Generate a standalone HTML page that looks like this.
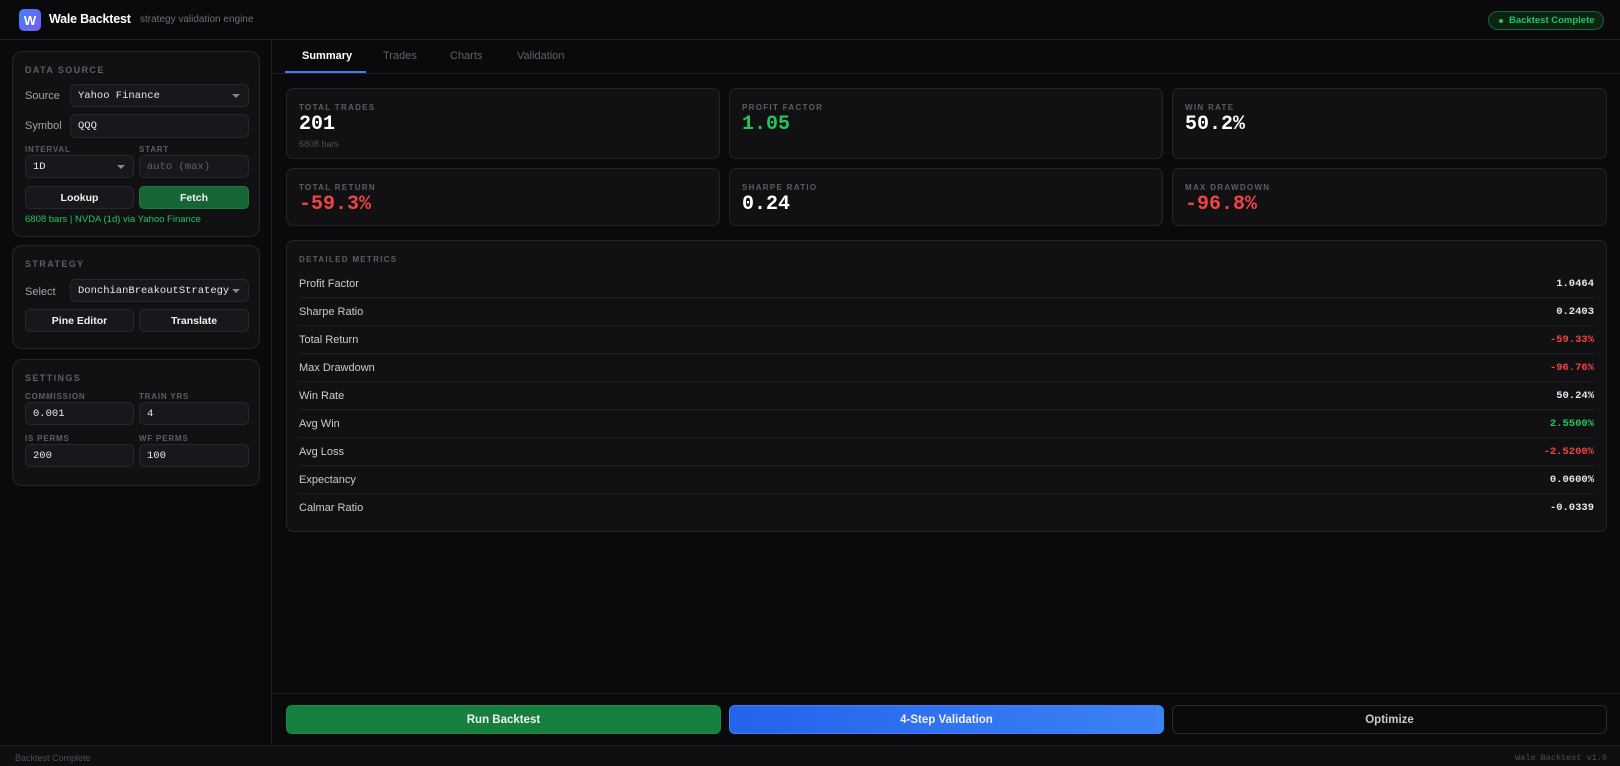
<!DOCTYPE html>
<html><head><meta charset="utf-8"><style>
*{box-sizing:border-box;margin:0;padding:0}
body{width:1620px;height:766px;background:#0a0a0c;font-family:"Liberation Sans",sans-serif;color:#e5e7eb;position:relative;overflow:hidden;font-size:11px}
.abs{position:absolute}
.mono{font-family:"Liberation Mono",monospace}
.panel{position:absolute;left:12px;width:248px;background:#111114;border:1px solid #24242a;border-radius:10px}
.ph{position:absolute;left:12px;font-size:9px;letter-spacing:1.4px;color:#5b5e66;font-weight:bold}
.lbl{position:absolute;font-size:11px;color:#a1a4ab}
.inp{position:absolute;background:#18181c;border:1px solid #27272d;border-radius:5px;font-family:"Liberation Mono",monospace;font-size:10.5px;color:#e5e7eb;padding-left:7px;display:flex;align-items:center}
.inp .car{position:absolute;right:8px;top:50%;margin-top:-2px;border-left:4px solid transparent;border-right:4px solid transparent;border-top:4px solid #888}
.sl{position:absolute;font-size:8px;letter-spacing:0.8px;color:#5b5e66;font-weight:bold}
.btn{position:absolute;background:#18181c;border:1px solid #27272d;border-radius:5px;font-size:10.5px;font-weight:bold;color:#f1f1f1;display:flex;align-items:center;justify-content:center}
.card{position:absolute;background:#111114;border:1px solid #24242a;border-radius:7px}
.card .t{position:absolute;left:12px;top:14px;font-size:8px;letter-spacing:1.3px;color:#5b5e66;font-weight:bold}
.card .v{position:absolute;left:12px;top:24px;font-family:"Liberation Mono",monospace;font-size:20px;font-weight:bold;color:#fff}
.row{position:absolute;left:12px;right:12px;height:28px;border-bottom:1px solid #1f1f24;font-size:11px;color:#c9ccd2}
.row span{position:absolute;top:8px}
.row b{position:absolute;right:0;top:8px;font-family:"Liberation Mono",monospace;font-size:10.5px;color:#e5e7eb}
.g{color:#22c55e!important}.r{color:#ef4444!important}
</style></head><body>
<div class="abs" style="left:0;top:0;width:1620px;height:40px;border-bottom:1px solid #1f1f24;background:#0a0a0c"></div>
<div class="abs" style="left:19px;top:9px;width:22px;height:22px;border-radius:5px;background:linear-gradient(135deg,#3b82f6,#7c5cf5);color:#fff;font-weight:bold;font-size:13px;display:flex;align-items:center;justify-content:center">W</div>
<div class="abs" style="left:49px;top:12px;font-size:12.5px;font-weight:bold;color:#fff;letter-spacing:-0.2px">Wale Backtest</div>
<div class="abs" style="left:140px;top:14px;font-size:10px;color:#6b6e76">strategy validation engine</div>
<div class="abs" style="left:1488px;top:11px;width:116px;height:19px;border-radius:10px;background:#0c2414;border:1px solid #166534;color:#22c55e;font-size:9.5px;font-weight:bold;display:flex;align-items:center;padding-left:20px">Backtest Complete</div>
<div class="abs" style="left:1499px;top:19px;width:4px;height:4px;border-radius:50%;background:#22c55e"></div>
<div class="abs" style="left:271px;top:40px;width:1px;height:704px;background:#1f1f24"></div>
<div class="panel" style="top:51px;height:186px">
<div class="ph" style="top:13px">DATA SOURCE</div>
<div class="lbl" style="left:12px;top:38px">Source</div>
<div class="inp" style="left:57px;top:32px;width:179px;height:23px">Yahoo Finance<i class="car"></i></div>
<div class="lbl" style="left:12px;top:68px">Symbol</div>
<div class="inp" style="left:57px;top:62px;width:179px;height:24px">QQQ</div>
<div class="sl" style="left:12px;top:93px">INTERVAL</div>
<div class="sl" style="left:126px;top:93px">START</div>
<div class="inp" style="left:12px;top:103px;width:109px;height:23px">1D<i class="car"></i></div>
<div class="inp" style="left:126px;top:103px;width:110px;height:23px;color:#5f6269">auto (max)</div>
<div class="btn" style="left:12px;top:134px;width:109px;height:23px">Lookup</div>
<div class="btn" style="left:126px;top:134px;width:110px;height:23px;background:#166534;border-color:#1a7a3f">Fetch</div>
<div class="abs" style="left:12px;top:162px;font-size:9.5px;color:#22c55e">6808 bars | NVDA (1d) via Yahoo Finance</div>
</div>
<div class="panel" style="top:245px;height:104px">
<div class="ph" style="top:13px">STRATEGY</div>
<div class="lbl" style="left:12px;top:40px">Select</div>
<div class="inp" style="left:57px;top:33px;width:179px;height:23px">DonchianBreakoutStrategy<i class="car"></i></div>
<div class="btn" style="left:12px;top:63px;width:109px;height:23px">Pine Editor</div>
<div class="btn" style="left:126px;top:63px;width:110px;height:23px">Translate</div>
</div>
<div class="panel" style="top:359px;height:127px">
<div class="ph" style="top:13px">SETTINGS</div>
<div class="sl" style="left:12px;top:32px">COMMISSION</div>
<div class="sl" style="left:126px;top:32px">TRAIN YRS</div>
<div class="inp" style="left:12px;top:42px;width:109px;height:23px">0.001</div>
<div class="inp" style="left:126px;top:42px;width:110px;height:23px">4</div>
<div class="sl" style="left:12px;top:74px">IS PERMS</div>
<div class="sl" style="left:126px;top:74px">WF PERMS</div>
<div class="inp" style="left:12px;top:84px;width:109px;height:23px">200</div>
<div class="inp" style="left:126px;top:84px;width:110px;height:23px">100</div>
</div>
<div class="abs" style="left:272px;top:73px;width:1348px;height:1px;background:#1f1f24"></div>
<div class="abs" style="left:302px;top:50px;font-size:11px;font-weight:bold;color:#fff">Summary</div>
<div class="abs" style="left:285px;top:71px;width:81px;height:2px;background:#3b82f6"></div>
<div class="abs" style="left:383px;top:50px;font-size:11px;color:#5f6269">Trades</div>
<div class="abs" style="left:450px;top:50px;font-size:11px;color:#5f6269">Charts</div>
<div class="abs" style="left:517px;top:50px;font-size:11px;color:#5f6269">Validation</div>
<div class="card" style="left:286px;top:88px;width:434px;height:71px"><div class="t">TOTAL TRADES</div><div class="v">201</div><div class="abs" style="left:12px;top:50px;font-size:9px;color:#4b4e56">6808 bars</div></div>
<div class="card" style="left:729px;top:88px;width:434px;height:71px"><div class="t">PROFIT FACTOR</div><div class="v g">1.05</div></div>
<div class="card" style="left:1172px;top:88px;width:435px;height:71px"><div class="t">WIN RATE</div><div class="v">50.2%</div></div>
<div class="card" style="left:286px;top:168px;width:434px;height:58px"><div class="t">TOTAL RETURN</div><div class="v r">-59.3%</div></div>
<div class="card" style="left:729px;top:168px;width:434px;height:58px"><div class="t">SHARPE RATIO</div><div class="v">0.24</div></div>
<div class="card" style="left:1172px;top:168px;width:435px;height:58px"><div class="t">MAX DRAWDOWN</div><div class="v r">-96.8%</div></div>
<div class="card" style="left:286px;top:240px;width:1321px;height:292px">
<div class="t">DETAILED METRICS</div>
<div class="row" style="top:29px"><span>Profit Factor</span><b>1.0464</b></div>
<div class="row" style="top:57px"><span>Sharpe Ratio</span><b>0.2403</b></div>
<div class="row" style="top:85px"><span>Total Return</span><b class="r">-59.33%</b></div>
<div class="row" style="top:113px"><span>Max Drawdown</span><b class="r">-96.76%</b></div>
<div class="row" style="top:141px"><span>Win Rate</span><b>50.24%</b></div>
<div class="row" style="top:169px"><span>Avg Win</span><b class="g">2.5500%</b></div>
<div class="row" style="top:197px"><span>Avg Loss</span><b class="r">-2.5200%</b></div>
<div class="row" style="top:225px"><span>Expectancy</span><b>0.0600%</b></div>
<div class="row" style="top:253px;border:none"><span>Calmar Ratio</span><b>-0.0339</b></div>
</div>
<div class="abs" style="left:272px;top:693px;width:1348px;height:1px;background:#1f1f24"></div>
<div class="btn" style="left:286px;top:705px;width:435px;height:29px;background:#15803d;border-color:#1a8a44;font-size:11.5px;border-radius:6px">Run Backtest</div>
<div class="btn" style="left:729px;top:705px;width:435px;height:29px;background:linear-gradient(90deg,#2563eb,#3b82f6);border-color:#3b82f6;font-size:11.5px;border-radius:6px">4-Step Validation</div>
<div class="btn" style="left:1172px;top:705px;width:435px;height:29px;background:#0a0a0c;border-color:#2a2a30;color:#c9ccd2;font-size:11.5px;border-radius:6px">Optimize</div>
<div class="abs" style="left:0;top:745px;width:1620px;height:21px;background:#0f0f12;border-top:1px solid #1f1f24"></div>
<div class="abs" style="left:15px;top:753px;font-size:9px;color:#4b4e56">Backtest Complete</div>
<div class="abs mono" style="right:13px;top:753px;font-size:8.5px;color:#4b4e56">Wale Backtest v1.0</div>
</body></html>
